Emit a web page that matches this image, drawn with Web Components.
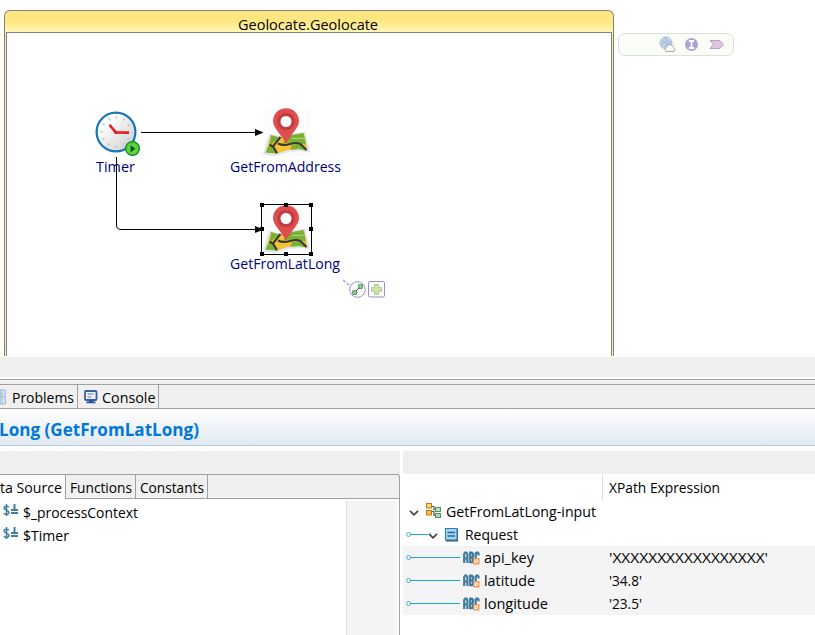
<!DOCTYPE html>
<html lang="en"><head><meta charset="utf-8"><title>Geolocate</title>
<style>
html,body{margin:0;background:#fff}
body{width:815px;height:635px;overflow:hidden;font:15px/20px "Open Sans","Noto Sans",sans-serif;color:#000}
</style></head><body>
<geo-workbench></geo-workbench>
<script>
const define=(name,html,ready)=>{
  const t=document.createElement('template');t.innerHTML=html;
  customElements.define(name,class extends HTMLElement{
    constructor(){super();this.attachShadow({mode:'open'}).append(t.content.cloneNode(true))}
    connectedCallback(){ready&&ready.call(this,this.shadowRoot)}
  });
};

// A label condensed or widened to the width given by its "w" attribute.
define('fit-text',`<style>:host{display:block;height:20px;white-space:pre;flex:none}span{display:inline-block;transform-origin:0 0}</style><span><slot></slot></span>`,
function(r){
  const w=+this.getAttribute('w'),s=r.querySelector('span');this.style.width=w+'px';
  const n=s.getBoundingClientRect().width;if(n)s.style.transform='scaleX('+w/n+')';
});

const icons={
timer:[46,46,`<defs><linearGradient id="g" x1="0" y1="0" x2="1" y2="1"><stop offset=".25" stop-color="#fff"/><stop offset="1" stop-color="#c8c8c8"/></linearGradient><radialGradient id="b"><stop stop-color="#8be04c"/><stop offset="1" stop-color="#3fd02d"/></radialGradient></defs>
<circle cx="21" cy="21" r="19.4" fill="url(#g)" stroke="#1376b5" stroke-width="2.2"/><circle cx="21" cy="21" r="14.5" fill="none" stroke="#a6cbe0" stroke-width="2.6" stroke-dasharray="1.3 6.292" stroke-dashoffset=".65"/>
<path d="M14.5 13.8l6.2 7.6 13.3.2" fill="none" stroke="#e51c23" stroke-width="2.6"/><circle cx="20.8" cy="21.4" r="1.7" fill="#e51c23"/>
<circle cx="37.5" cy="37.5" r="6.9" fill="url(#b)" stroke="#16851d" stroke-width="1.3"/><path d="M35.5 34v7.4l5-3.7z" fill="#124c39"/>`],
map:[50,50,`<rect x="1" y="1" width="48" height="47" fill="#fcfcfc"/>
<path d="M7 25.500l9 2.500 12-2 15-2.500 5 21-10-1.500-12 1-13 4-12-1.500z" fill="#dde6ee"/>
<path d="M9 27l8 2.500 12-2 13-2 3.500 17-8-1.500-12 1-11 3.500-11-1z" fill="#f4c232"/>
<path d="M26.500 27.500l15-2.500 2.500 11.500-10-2-13 .8zM9 27l8 2.500-9.500 8.500zM7 37.500l5 1.500 3.500 6.500-12-1zM30 37l8-1.500 5 4.500 1.500 2.500-8-1.500-8 .8z" fill="#79b133"/>
<path d="M18.500 29L11 38.300l4 7M7.500 36.800L12 39M16 35.500q5 2.500 12 .5 9-2.500 12 1.500l4.500 4.500" fill="none" stroke="#35383c" stroke-width="2.100"/><path d="M30 30.500l12-.3" stroke="#c1db9a" stroke-width=".8"/>
<path d="M24 35.500C19.500 26.500 11 20 11 13a13 12.700 0 0 1 26 0c0 7-8.500 13.500-13 22.500z" fill="#e04d4e"/><circle cx="24" cy="13.500" r="8.800" fill="#c53c40"/><circle cx="24" cy="13.500" r="5.500" fill="#fff"/>`],
globe:[17,17,`<circle cx="7" cy="7" r="6" fill="#c4d8e9" stroke="#aabdd2"/><path d="M2.500 4l8 5M5 2l7 5M2 9l7-5M5 11l7-6" stroke="#9db5d6" fill="none"/><path d="M7 15.500q-2.500-2.500.5-4 .3-3 3.500-3 2.500 0 3.500 3 2.500 2 .5 4z" fill="#fafafa" stroke="#aaa7a4"/>`],
info:[15,15,`<circle cx="7.500" cy="7.500" r="6.500" fill="#aaa0d5"/><path d="M4.800 4h5.400M7.500 4v7M4.800 11h5.400" stroke="#fff" stroke-width="1.800"/>`],
signal:[16,11,`<path d="M1 1.500h10l3.500 4-3.500 4H1l3.300-4z" fill="#dbc5df" stroke="#b9a0c2"/>`],
problems:[7,16,`<path d="M0 1h4q3 0 1 3v7q2 4-1 4H0z" fill="#dcebf6" stroke="#9aabc0"/><path d="M0 5h3M0 8h5M2 2v12" stroke="#9dbbd7"/>`],
console:[14,14,`<rect x="1" y="1" width="11.500" height="9" rx="1" fill="#eef3fb" stroke="#3c5f9f" stroke-width="1.800"/><path d="M3.500 4h6M3.500 7h4" stroke="#62799d"/><path d="M2.500 12.300h9M5 11h4" stroke="#27559a" stroke-width="1.800" fill="none"/>`],
variable:[15,13,`<path d="M5.800 3.300C4.500 1.800 1 2 1 4s5 2.200 5 4.500-3.500 2.500-5.200.8M3.500 0v12" stroke="#3f7e9f" fill="none" stroke-width="1.500"/><path d="M8 6h7M8 9h7M11.500 0v6" stroke="#3f7e9f" stroke-width="2"/>`],
schema:[16,16,`<path d="M5 8.500h3v4h2M5 3.500h3v3h2" stroke="#555d53" fill="none" stroke-width="1.200"/><g stroke="#b87922"><rect x=".5" y=".5" width="5" height="4.500" fill="#ffd66e"/><rect x=".5" y="7.500" width="5" height="4.500" fill="#ffc13b"/></g><g stroke="#52946a"><rect x="9.500" y="4.500" width="5" height="4" fill="#b7e3c1"/><rect x="9.500" y="10.500" width="5" height="4" fill="#a4d7b0"/></g>`],
request:[14,14,`<rect x="1" y="1" width="12" height="12.500" fill="#245f82"/><rect x=".5" y=".5" width="11.500" height="11.500" fill="#a0d5f2" stroke="#377a9e"/><path d="M2.500 4.500h7.500M2.500 8h7.500" stroke="#27698e" stroke-width="1.600"/>`],
abc:[17,14,`<g fill="none" stroke="#3e7b9c" stroke-width="2.200"><path d="M1.200 12V3l1-1.500h1.200l1 1.500v9M1.200 7.500h3.200M7.200 1v11M6.200 1.700h2.600l1.200 1.300v2.200l-1 1.200H7.300M9 6.400l1 1.300v2.500l-1 1H6.200M15.500 4.500V2.500l-.8-.9h-1.200l-.8.9v8l.8 1.200"/></g><rect x="10.800" y="7.800" width="5" height="5" fill="#fff4e8" stroke="#f28a3b" stroke-width="1.200"/><path d="M12.500 9.500l2 2" stroke="#f28a3b"/>`],
chevron:[10,6,`<path d="M1 .8l4 4 4-4" fill="none" stroke="#444" stroke-width="1.700"/>`],
handles:[42,22,`<path d="M0 2l6 5" stroke="#9c97cd" stroke-dasharray="3 2" stroke-width="1.200"/><circle cx="14.500" cy="11.500" r="7.800" fill="#fff" stroke="#9690c7"/><path d="M11 15l6-6" stroke="#333"/><g fill="#7be38b" stroke="#3f6b43" stroke-width=".8"><rect x="9.800" y="12.800" width="3.500" height="3.500"/><rect x="15.800" y="6.800" width="3.500" height="3.500"/></g><rect x="25.500" y="3.500" width="16" height="15.500" rx="1.500" fill="#fff" stroke="#9690c7"/><path d="M31.500 6.500h4v3h3v4h-3v3h-4v-3h-3v-4h3z" fill="#cfe2ae" stroke="#b1cb99"/>`]
};
customElements.define('ui-icon',class extends HTMLElement{connectedCallback(){
  const [w,h,m]=icons[this.getAttribute('name')];
  (this.shadowRoot||this.attachShadow({mode:'open'})).innerHTML=`<style>:host{display:block;flex:none;width:${w}px;height:${h}px}svg{display:block}</style><svg width="${w}" height="${h}" viewBox="0 0 ${w} ${h}">${m}</svg>`;
}});

define('process-canvas',`<style>
:host{display:block;position:relative;height:357px;overflow:hidden}
.pool{position:absolute;left:4px;top:10px;width:608px;height:345px;border:1px solid #828282;border-bottom:0;border-radius:6px 6px 0 0;background:linear-gradient(#ffe680 0,#ffe680 10px,#fff9b4 21px,#ffe9a0 22px)}
.lane{position:absolute;left:6px;top:32px;width:604px;height:323px;border:1px solid #828282;border-bottom:0;background:#fff}
.p,svg{position:absolute}.n{color:#000080}
.tool{position:absolute;left:618px;top:33px;width:74px;height:21px;padding-left:40px;border:1px solid #dedede;border-radius:7px;background:#fafcf7;display:flex;align-items:center;gap:10px}
.tool ui-icon:first-child{margin-right:-2px}
</style><div class="pool"></div><div class="lane"></div><fit-text class="p" style="left:238px;top:14px" w="140">Geolocate.Geolocate</fit-text>
<div class="tool"><ui-icon name="globe"></ui-icon><ui-icon name="info"></ui-icon><ui-icon name="signal"></ui-icon></div>
<ui-icon class="p" name="timer" style="left:95px;top:111px"></ui-icon>
<ui-icon class="p" name="map" style="left:262px;top:108px"></ui-icon><ui-icon class="p" name="map" style="left:262px;top:205px"></ui-icon>
<fit-text class="p n" style="left:96px;top:156px" w="39">Timer</fit-text><fit-text class="p n" style="left:230px;top:156px" w="111">GetFromAddress</fit-text><fit-text class="p n" style="left:230px;top:253px" w="110">GetFromLatLong</fit-text>
<svg style="left:0;top:0" width="400" height="310"><g fill="none" stroke="#000"><path d="M141 132.500h116M116.500 157v68q0 4.500 4.500 4.500h136"/><rect x="261.500" y="204.500" width="50" height="50"/></g><path d="M255 129l8.500 3.500-8.500 3.500zM255 226l8.500 3.500-8.500 3.500z"/><path d="M260 203h4v4h-4zM284 203h4v4h-4zM309 203h4v4h-4zM260 227h4v4h-4zM309 227h4v4h-4zM260 252h4v4h-4zM284 252h4v4h-4zM309 252h4v4h-4z"/></svg>
<ui-icon class="p" name="handles" style="left:343px;top:278px"></ui-icon>`);

define('view-tabs',`<style>:host{display:flex;box-sizing:border-box;height:25px;border:1px solid #a0a0a0;border-width:1px 0;background:#f0f0f0}
div{box-sizing:border-box;display:flex;border-right:1px solid #a0a0a0;padding-top:2px}.a{width:78px;gap:5px}.b{width:81px;padding-left:6px;gap:4px}ui-icon{margin-top:2px}.b ui-icon{margin-top:3px}</style>
<div class="a"><ui-icon name="problems"></ui-icon><fit-text w="62">Problems</fit-text></div><div class="b"><ui-icon name="console"></ui-icon><fit-text w="53.500">Console</fit-text></div>`);

define('property-title',`<style>:host{display:block;box-sizing:border-box;height:37px;padding-top:11px;border-bottom:1px solid #b6c9e0;background:linear-gradient(#fff,#e1e9f1);color:#0078d7;font-size:17px;font-weight:700}fit-text{margin-left:-1px}</style><fit-text w="200">Long (GetFromLatLong)</fit-text>`);

define('data-source',`<style>:host{display:flex;flex-direction:column;width:400px;flex:none}
.bar{height:23px;background:#efefef}.tabs{height:25px;box-sizing:border-box;display:flex;border:1px solid #a0a0a0;border-left:0;border-radius:0 3px 0 0;background:#f0f0f0}
.t{box-sizing:border-box;padding:2px 0 0 4px;border-right:1px solid #a0a0a0}.on{width:66px;height:24px;padding-left:0;background:#fff}
.body{flex:1;display:flex;justify-content:space-between;border-right:1px solid #a0a0a0;padding:2px 1px 0 0}
.row{display:flex;height:23px;padding-left:3px;gap:5px}.row ui-icon{margin-top:2px}.side{width:51px;border-left:1px solid #e0e0e0;background:#f4f4f4}</style>
<div class="bar"></div><div class="tabs"><div class="t on"><fit-text w="62">ta Source</fit-text></div><div class="t" style="width:70px"><fit-text w="62">Functions</fit-text></div><div class="t" style="width:72px"><fit-text w="64">Constants</fit-text></div></div>
<div class="body"><div style="padding-top:1px"><div class="row"><ui-icon name="variable"></ui-icon><fit-text w="115">$_processContext</fit-text></div><div class="row"><ui-icon name="variable"></ui-icon><fit-text w="46">$Timer</fit-text></div></div><div class="side"></div></div>`);

// One line of the mapping tree; "line" is the length of its connector.
define('map-row',`<style>:host{display:flex;height:23px;box-sizing:border-box;padding-top:1px}.l{width:205.500px;display:flex;flex:none}.c{box-sizing:border-box;position:relative;height:20px;flex:none}.c[data-on]:before{content:"";position:absolute;left:7px;right:0;top:10px;height:1px;background:#19acc7}.c[data-on]:after{content:"";position:absolute;left:3px;top:8px;width:3px;height:3px;border:1px solid #46b5c9;border-radius:50%}</style><div class="l"><div class="c"></div><slot></slot></div><slot name="value"></slot>`,
function(r){const n=+this.getAttribute('line'),c=r.querySelector('.c');c.style.width=(n||6)+'px';if(n)c.dataset.on=''});

define('input-map',`<style>:host{display:block;flex:1}.bar{height:23px;background:#efefef}.head{height:25px;display:flex;padding-top:1px}.col{width:199px;border-right:1px solid #dedede;margin-top:-1px;margin-right:6px}.head fit-text{margin-top:2px}
.g{background:#f4f4f4}</style><div class="bar"></div><div class="head"><div class="col"></div><fit-text w="111">XPath Expression</fit-text></div>
<map-row><ui-icon name="chevron" style="margin:9px 7px 0 0"></ui-icon><ui-icon name="schema" style="margin:2px 4px 0 0"></ui-icon><fit-text w="150">GetFromLatLong-input</fit-text></map-row>
<map-row line="25"><ui-icon name="chevron" style="margin:9px 7px 0 0"></ui-icon><ui-icon name="request" style="margin:4px 6px 0 0"></ui-icon><fit-text w="53">Request</fit-text></map-row>
<map-row class="g" line="57"><ui-icon name="abc" style="margin:4px 4px 0 3px"></ui-icon><fit-text w="50">api_key</fit-text><fit-text slot="value" w="159">'XXXXXXXXXXXXXXXXX'</fit-text></map-row>
<map-row class="g" line="57"><ui-icon name="abc" style="margin:4px 4px 0 3px"></ui-icon><fit-text w="51">latitude</fit-text><fit-text slot="value" w="33">'34.8'</fit-text></map-row>
<map-row class="g" line="57"><ui-icon name="abc" style="margin:4px 4px 0 3px"></ui-icon><fit-text w="64">longitude</fit-text><fit-text slot="value" w="33">'23.5'</fit-text></map-row>`);

define('geo-workbench',`<style>:host{display:flex;flex-direction:column;width:815px;height:635px;overflow:hidden}
.sash{height:20px;background:#efefef}.edge{height:4px;margin-top:2px;border-top:1px solid #a0a0a0;background:#f0f0f0}.split{display:flex;gap:3px;flex:1;margin-top:5px}</style>
<process-canvas></process-canvas><div class="sash"></div><div class="edge"></div><view-tabs></view-tabs><property-title></property-title><div class="split"><data-source></data-source><input-map></input-map></div>`);
</script></body></html>
